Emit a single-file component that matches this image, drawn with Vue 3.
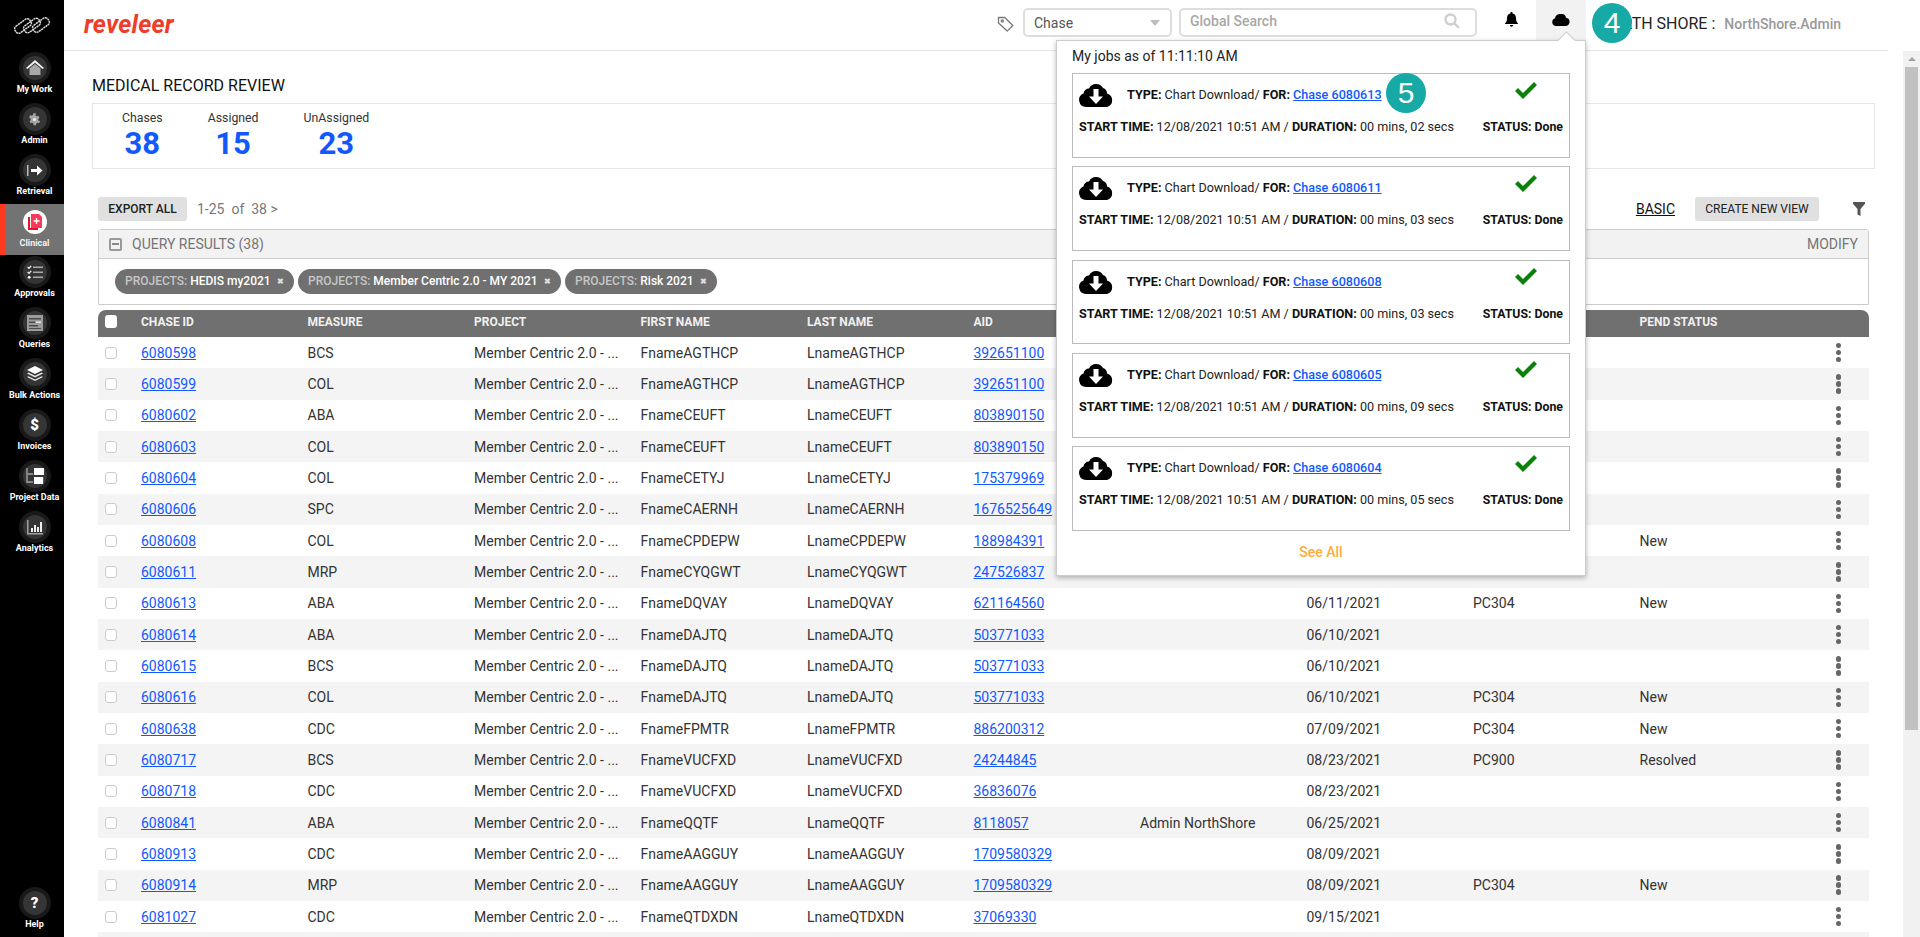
<script setup>
const navItems = [
  { label: 'My Work', icon: 'home' },
  { label: 'Admin', icon: 'gear' },
  { label: 'Retrieval', icon: 'retrieval' },
  { label: 'Clinical', icon: 'clinical', active: true },
  { label: 'Approvals', icon: 'approvals' },
  { label: 'Queries', icon: 'queries' },
  { label: 'Bulk Actions', icon: 'bulk' },
  { label: 'Invoices', icon: 'invoices' },
  { label: 'Project Data', icon: 'project' },
  { label: 'Analytics', icon: 'analytics' }
]
const stats = [
  { label: 'Chases', value: 38 },
  { label: 'Assigned', value: 15 },
  { label: 'UnAssigned', value: 23 }
]
const chips = ['HEDIS my2021', 'Member Centric 2.0 - MY 2021', 'Risk 2021']
const columns = ['CHASE ID', 'MEASURE', 'PROJECT', 'FIRST NAME', 'LAST NAME', 'AID', '', '', '', 'PEND STATUS']
const P = 'Member Centric 2.0 - ...'
const rows = [
  ['6080598', 'BCS', 'FnameAGTHCP', 'LnameAGTHCP', '392651100'],
  ['6080599', 'COL', 'FnameAGTHCP', 'LnameAGTHCP', '392651100'],
  ['6080602', 'ABA', 'FnameCEUFT', 'LnameCEUFT', '803890150'],
  ['6080603', 'COL', 'FnameCEUFT', 'LnameCEUFT', '803890150'],
  ['6080604', 'COL', 'FnameCETYJ', 'LnameCETYJ', '175379969'],
  ['6080606', 'SPC', 'FnameCAERNH', 'LnameCAERNH', '1676525649'],
  ['6080608', 'COL', 'FnameCPDEPW', 'LnameCPDEPW', '188984391', '', '', '', 'New'],
  ['6080611', 'MRP', 'FnameCYQGWT', 'LnameCYQGWT', '247526837'],
  ['6080613', 'ABA', 'FnameDQVAY', 'LnameDQVAY', '621164560', '', '06/11/2021', 'PC304', 'New'],
  ['6080614', 'ABA', 'FnameDAJTQ', 'LnameDAJTQ', '503771033', '', '06/10/2021', '', ''],
  ['6080615', 'BCS', 'FnameDAJTQ', 'LnameDAJTQ', '503771033', '', '06/10/2021', '', ''],
  ['6080616', 'COL', 'FnameDAJTQ', 'LnameDAJTQ', '503771033', '', '06/10/2021', 'PC304', 'New'],
  ['6080638', 'CDC', 'FnameFPMTR', 'LnameFPMTR', '886200312', '', '07/09/2021', 'PC304', 'New'],
  ['6080717', 'BCS', 'FnameVUCFXD', 'LnameVUCFXD', '24244845', '', '08/23/2021', 'PC900', 'Resolved'],
  ['6080718', 'CDC', 'FnameVUCFXD', 'LnameVUCFXD', '36836076', '', '08/23/2021', '', ''],
  ['6080841', 'ABA', 'FnameQQTF', 'LnameQQTF', '8118057', 'Admin NorthShore', '06/25/2021', '', ''],
  ['6080913', 'CDC', 'FnameAAGGUY', 'LnameAAGGUY', '1709580329', '', '08/09/2021', '', ''],
  ['6080914', 'MRP', 'FnameAAGGUY', 'LnameAAGGUY', '1709580329', '', '08/09/2021', 'PC304', 'New'],
  ['6081027', 'CDC', 'FnameQTDXDN', 'LnameQTDXDN', '37069330', '', '09/15/2021', '', ''],
  ['', '', '', '', '', '', '', '', '']
]
const jobs = [
  { id: '6080613', secs: '02' },
  { id: '6080611', secs: '03' },
  { id: '6080608', secs: '03' },
  { id: '6080605', secs: '09' },
  { id: '6080604', secs: '05' }
]
</script>

<template>
  <div class="app">
    <aside class="sidebar">
      <svg class="brand" width="36" height="18" viewBox="0 0 36 18" fill="none" stroke="#d8d8d8" stroke-width="1.500" stroke-dasharray="2.200 .5">
        <rect x="-9" y="-4" width="18" height="8" rx="3" transform="translate(9 10) rotate(-36)" />
        <rect x="-9" y="-4" width="18" height="8" rx="3" transform="translate(18 9.500) rotate(-36)" />
        <rect x="-9" y="-4" width="18" height="8" rx="3" transform="translate(27 9) rotate(-36)" />
      </svg>
      <nav class="nav">
        <a v-for="item in navItems" :key="item.label" class="nav-item" :class="{ active: item.active }">
          <span class="ring">
            <span class="disc">
              <svg v-if="item.icon === 'home'" width="18" height="16" viewBox="0 0 18 16"><path d="M3.500 8.500 9 4l5.500 4.500V15H3.500z" fill="#a8a8a8" /><path d="M0 8 9 0l9 8-1.500 1L9 2.800 1.500 9z" fill="#f0f0f0" /></svg>
              <svg v-else-if="item.icon === 'gear'" width="15" height="15" viewBox="0 0 24 24"><path fill="#a6a6a6" d="M19.400 13c.1-.3.100-.7.100-1s0-.7-.1-1l2.100-1.600-2-3.500-2.500 1a7 7 0 0 0-1.700-1L15.500 2h-4l-.4 2.900c-.6.200-1.200.6-1.700 1l-2.500-1-2 3.500L7.500 11c-.1.300-.1.700-.1 1s0 .7.100 1l-2.100 1.600 2 3.500 2.500-1c.5.400 1.100.8 1.700 1l.4 2.900h4l.4-2.900c.6-.2 1.200-.6 1.700-1l2.500 1 2-3.500z" transform="translate(-1.500)" /><circle cx="12" cy="12" r="2.500" fill="#eee" /></svg>
              <svg v-else-if="item.icon === 'retrieval'" width="16" height="13" viewBox="0 0 16 13"><rect x="0" y="1" width="1.500" height="11" fill="#bbb" /><path d="M4 5h6V1.500L15.500 6.500 10 11.500V8H4z" fill="#fff" /></svg>
              <svg v-else-if="item.icon === 'clinical'" width="16" height="18" viewBox="0 0 16 18"><path d="M1 4h2v11h8v2H1z" fill="#e8112d" /><path d="M4 1h8l3 3v11H4z" fill="#f7395a" /><path d="M8.800 5h1.400v2.300h2.300v1.400h-2.300V11H8.800V8.700H6.500V7.300h2.300z" fill="#fff" /></svg>
              <svg v-else-if="item.icon === 'approvals'" width="16" height="14" viewBox="0 0 16 14" fill="none"><path d="M.7 2 2 3.300 4.200.8M.7 7 2 8.300 4.200 5.800" stroke="#fff" stroke-width="1.200" /><circle cx="2.200" cy="12.300" r="1.400" fill="#fff" /><path d="M6 2.200h10M6 7.200h10M6 12.200h10" stroke="#aaa" stroke-width="1.500" /></svg>
              <svg v-else-if="item.icon === 'queries'" width="16" height="16" viewBox="0 0 16 16"><rect width="16" height="16" fill="#9b9b9b" /><path d="M2 3h12v1.500H2zM2 6.500h6V8H2zM2 10h9v1.500H2zM2 13h12v1H2z" fill="#4a4a4a" /><path d="M9 6.500h5V8H9z" fill="#e8e8e8" /></svg>
              <svg v-else-if="item.icon === 'bulk'" width="16" height="16" viewBox="0 0 16 16"><path d="M8 0l8 4-8 4-8-4z" fill="#fff" /><path d="M1.500 6.600 8 9.800l6.500-3.200L16 7.500 8 11.500 0 7.500z" fill="#e6e6e6" /><path d="M1.500 10.200 8 13.400l6.500-3.200L16 11l-8 4-8-4z" fill="#e6e6e6" /></svg>
              <span v-else-if="item.icon === 'invoices'" class="glyph">$</span>
              <svg v-else-if="item.icon === 'project'" width="18" height="16" viewBox="0 0 18 16"><path d="M1 0v14h6M1 6h6" fill="none" stroke="#8a8a8a" stroke-width="1.800" /><rect x="8" y="0" width="10" height="7" fill="#fff" /><rect x="8" y="9" width="10" height="7" fill="#fff" /><rect x="17" y="9" width="1" height="7" fill="#e8112d" /></svg>
              <svg v-else-if="item.icon === 'analytics'" width="16" height="15" viewBox="0 0 16 15"><path d="M0 0h1.500v13H16v1.500H0z" fill="#a0a0a0" /><path d="M4 8h2v4H4zM7 5h2v7H7zM10 7h2v5h-2zM13 2h2v10h-2z" fill="#eee" /></svg>
            </span>
          </span>
          <span class="nav-label">{{ item.label }}</span>
        </a>
        <a class="nav-item help">
          <span class="ring"><span class="disc"><span class="glyph">?</span></span></span>
          <span class="nav-label">Help</span>
        </a>
      </nav>
    </aside>

    <div class="main">
      <header class="topbar">
        <span class="wordmark">reveleer</span>
        <svg class="tag" width="18" height="18" viewBox="0 0 18 18" fill="none" stroke="#777" stroke-width="1.300"><path d="M1.500 2.500h6.300l8 8-5.600 5.600-8.700-8z" stroke-linejoin="round" /><circle cx="5.300" cy="6" r="1.100" /></svg>
        <div class="select">
          <span>Chase</span>
          <i class="caret"></i>
        </div>
        <div class="search">
          <span>Global Search</span>
          <svg width="16" height="16" viewBox="0 0 16 16" fill="none" stroke="#cfcfcf" stroke-width="2.400"><circle cx="6.500" cy="6.500" r="5" /><path d="m10 10 5 5" /></svg>
        </div>
        <div class="bell-cell">
          <svg width="13" height="15" viewBox="0 0 13 15" fill="#000"><path d="M6.500 0c.7 0 1.100.4 1.100 1v.5C9.800 2 11 3.700 11 6c0 3 .7 4.200 2 5.500V12H0v-.5C1.300 10.200 2 9 2 6c0-2.300 1.200-4 3.400-4.500V1c0-.6.400-1 1.100-1z" /><path d="M4.800 13h3.400a1.700 1.700 0 0 1-3.400 0z" /></svg>
        </div>
        <div class="cloud-cell">
          <svg width="18" height="13" viewBox="0 0 18 13" fill="#000"><path d="M4 13a4 4 0 0 1-1-7.800A5 5 0 0 1 9 1a4.500 4.500 0 0 1 5 3.700A4.200 4.200 0 0 1 14 13z" /></svg>
        </div>
        <div class="account">
          <span class="org">NORTH SHORE :</span>
          <span class="user">NorthShore.Admin</span>
        </div>
      </header>

      <div class="body">
        <main class="content">
          <h1 class="title">MEDICAL RECORD REVIEW</h1>
          <section class="stats">
            <div v-for="s in stats" :key="s.label" class="stat">
              <span class="stat-label">{{ s.label }}</span>
              <strong class="stat-value">{{ s.value }}</strong>
            </div>
          </section>

          <div class="inner">
            <div class="toolbar">
              <button class="btn export">EXPORT ALL</button>
              <span class="pager">1-25&nbsp; of&nbsp; 38 &gt;</span>
              <a class="basic">BASIC</a>
              <button class="btn create">CREATE NEW VIEW</button>
              <svg class="filter" width="12" height="14" viewBox="0 0 12 14" fill="#555"><path d="M0 0h12v1.800L7.500 7v7l-3-1.500V7L0 1.800z" /></svg>
            </div>

            <section class="panel">
              <div class="panel-head">
                <span class="collapse"><i></i></span>
                <span class="panel-title">QUERY RESULTS (38)</span>
                <span class="modify">MODIFY</span>
              </div>
              <div class="chips">
                <span v-for="c in chips" :key="c" class="chip"><em>PROJECTS:</em> {{ c }} <b>✖</b></span>
              </div>
            </section>

            <section class="grid">
              <div class="grid-head line">
                <div class="cell"><span class="hcheck"></span></div>
                <div v-for="(c, i) in columns" :key="i" class="cell">{{ c }}</div>
                <div class="cell"></div>
              </div>
              <div v-for="(r, i) in rows" :key="i" class="line row">
                <div class="cell"><span v-if="r[0]" class="check"></span></div>
                <div class="cell"><a class="link">{{ r[0] }}</a></div>
                <div class="cell">{{ r[1] }}</div>
                <div class="cell">{{ r[0] ? P : '' }}</div>
                <div class="cell">{{ r[2] }}</div>
                <div class="cell">{{ r[3] }}</div>
                <div class="cell"><a class="link">{{ r[4] }}</a></div>
                <div class="cell">{{ r[5] }}</div>
                <div class="cell">{{ r[6] }}</div>
                <div class="cell">{{ r[7] }}</div>
                <div class="cell">{{ r[8] }}</div>
                <div class="cell dots-cell"><span v-if="r[0]" class="dots"><i></i><i></i><i></i></span></div>
              </div>
            </section>
          </div>
        </main>
        <div class="scrollbar">
          <i class="up"></i>
          <span class="thumb"></span>
        </div>
      </div>
    </div>

    <div class="popup">
      <span class="pointer"></span>
      <div class="popup-title">My jobs as of 11:11:10 AM</div>
      <article v-for="j in jobs" :key="j.id" class="job">
        <div class="job-top">
          <svg class="job-icon" width="35" height="25" viewBox="0 0 35 25"><path d="M7 25A7 7 0 0 1 4.500 11.500 5.500 5.500 0 0 1 10 6.500 8 8 0 0 1 24 6a6 6 0 0 1 4 5.500A7 7 0 0 1 28 25z" fill="#000" /><path d="M14.500 7h5v7.500h4.500L17 22l-7-7.500h4.500z" fill="#fff" /></svg>
          <span class="job-type"><b>TYPE:</b> Chart Download/ <b>FOR:</b> <a class="link">Chase {{ j.id }}</a></span>
          <svg class="job-check" width="22" height="17" viewBox="0 0 22 17"><path d="M0 9l3-3 5 5L19 0l3 3L8 17z" fill="#0a820a" /></svg>
        </div>
        <div class="job-bottom">
          <span><b>START TIME:</b> 12/08/2021 10:51 AM / <b>DURATION:</b> 00 mins, {{ j.secs }} secs</span>
          <b class="job-status">STATUS: Done</b>
        </div>
      </article>
      <div class="see-all">See All</div>
    </div>

    <span class="marker marker-4">4</span>
    <span class="marker marker-5">5</span>
  </div>
</template>

<style>
html, body { margin: 0; height: 100%; overflow: hidden; background: #fff; }
</style>

<style scoped>
* { box-sizing: border-box; }
.app { position: relative; display: flex; width: 1920px; height: 937px; overflow: hidden; font-family: Roboto, "Liberation Sans", sans-serif; color: #333; font-size: 14px; background: #fff; }

.sidebar { position: relative; width: 64px; flex: none; background: #000; display: flex; flex-direction: column; }
.brand { position: absolute; left: 14px; top: 16px; }
.nav { display: flex; flex-direction: column; flex: 1; padding-top: 51px; }
.nav-item { display: flex; flex-direction: column; align-items: center; height: 51px; flex: none; padding-top: 1px; border-left: 5px solid transparent; }
.nav-item.active { background: #737373; border-left-color: #ff3b1f; padding-top: 2px; }
.nav-item.help { margin-top: auto; }
.ring { width: 32px; height: 32px; border-radius: 50%; background: #191919; display: flex; align-items: center; justify-content: center; }
.disc { width: 24px; height: 24px; border-radius: 50%; background: #353535; display: flex; align-items: center; justify-content: center; }
.active .ring { background: transparent; }
.active .disc { background: #fff; }
.glyph { color: #fff; font-weight: 900; font-size: 15px; line-height: 1; }
.nav-label { margin-top: -1px; font-size: 9px; line-height: 12px; font-weight: 700; color: #fff; white-space: nowrap; }
.active .nav-label { color: #f2f2f2; }

.main { flex: 1; min-width: 0; display: flex; flex-direction: column; }
.topbar { width: 1824px; height: 51px; flex: none; display: flex; border-bottom: 1px solid #e6e6e6; padding-left: 20px; }
.wordmark { color: #ee3d2a; font-style: italic; font-weight: 700; font-size: 25px; line-height: 50px; width: 914px; flex: none; letter-spacing: .2px; }
.tag { margin-top: 15px; margin-left: -1px; }
.select { width: 149px; height: 29px; margin: 8px 0 0 8px; border: 2px solid #ddd; border-radius: 5px; display: flex; align-items: center; justify-content: space-between; padding: 0 10px 0 9px; color: #555; }
.caret { border: 5px solid transparent; border-top: 6px solid #bdbdbd; border-bottom: 0; }
.search { width: 298px; height: 29px; margin: 8px 0 0 7px; border: 2px solid #ddd; border-radius: 5px; display: flex; align-items: center; justify-content: space-between; padding: 0 15px 3px 9px; color: #a8a8a8; font-weight: 500; }
.bell-cell { width: 59px; height: 40px; display: flex; align-items: center; justify-content: center; padding: 0 0 2px 9px; }
.cloud-cell { width: 50px; height: 40px; background: #f2f2f2; display: flex; align-items: center; justify-content: center; padding-bottom: 2px; }
.account { margin-left: 14px; height: 50px; display: flex; align-items: center; padding-bottom: 3px; white-space: nowrap; }
.org { font-size: 16px; color: #222; }
.user { margin-left: 9px; color: #999; font-weight: 500; }

.body { flex: 1; min-height: 0; display: flex; }
.content { flex: 1; min-width: 0; padding: 25px 28px 0; overflow: hidden; }
.title { margin: 0; font-size: 16px; line-height: 20px; font-weight: 400; color: #111; }
.stats { margin-top: 7px; height: 66px; border: 1px solid #e6e6e6; display: flex; gap: 45px; padding: 5px 0 0 29px; }
.stat { display: flex; flex-direction: column; align-items: center; }
.stat-label { font-size: 12.300px; line-height: 18px; color: #333; }
.stat-value { font-size: 31px; line-height: 33px; font-weight: 700; color: #1159ff; }

.inner { margin: 28px 6px 0; }
.toolbar { display: flex; align-items: center; height: 24px; }
.btn { border: 0; border-radius: 3px; background: #e0e0e0; height: 24px; padding: 0; font: 500 12px/24px Roboto, "Liberation Sans", sans-serif; color: #222; }
.export { width: 89px; }
.pager { margin-left: 10px; color: #777; }
.basic { margin-left: auto; color: #111; text-decoration: underline; }
.create { width: 124px; margin-left: 20px; font-weight: 400; }
.filter { margin: 0 4px 0 34px; }

.panel { margin-top: 8px; border: 1px solid #ccc; border-radius: 3px 3px 0 0; height: 76px; }
.panel-head { height: 29px; background: #f2f2f2; border-bottom: 1px solid #ccc; display: flex; align-items: center; padding: 0 10px; color: #757575; }
.collapse { width: 13px; height: 13px; border: 2px solid #999; border-radius: 2px; display: flex; align-items: center; justify-content: center; }
.collapse i { width: 7px; height: 2px; background: #888; }
.panel-title { margin-left: 10px; }
.modify { margin-left: auto; }
.chips { display: flex; gap: 4px; padding: 10px 0 0 16px; }
.chip { height: 25px; border-radius: 13px; background: #707070; color: #fff; font-size: 12px; font-weight: 500; line-height: 24px; padding: 0 10px; white-space: nowrap; }
.chip em { font-style: normal; color: #c6c6c6; }
.chip b { margin-left: 3.500px; font-size: 8px; color: #ddd; vertical-align: 1px; }

.grid { margin-top: 5px; }
.line { display: grid; grid-template-columns: 43px repeat(10, 166.5px) 1fr; align-items: center; }
.grid-head { height: 27px; background: #707070; border-radius: 8px 8px 0 0; color: #f0f0f0; font-size: 12px; font-weight: 700; }
.row { height: 31.33px; }
.row:nth-child(odd) { background: #f4f4f4; }
.row:nth-child(even) { background: #fff; }
.cell { padding: 0; white-space: nowrap; }
.grid-head .cell { padding-bottom: 4px; }
.hcheck, .check { display: block; width: 12px; height: 12px; margin-left: 7px; border-radius: 3px; }
.hcheck { background: #fff; height: 13px; }
.check { background: #fff; border: 1px solid #ccc; }
.link { color: #1159ff; text-decoration: underline; }
.dots-cell { display: flex; justify-content: flex-end; padding-right: 28px; }
.dots { display: flex; flex-direction: column; gap: 1.500px; }
.dots i { width: 5.500px; height: 5.500px; border-radius: 50%; background: #666; }

.scrollbar { position: relative; width: 17px; flex: none; background: #f1f1f1; }
.up { position: absolute; left: 5px; top: 6px; border: 4px solid transparent; border-top: 0; border-bottom: 4px solid #a3a3a3; }
.thumb { position: absolute; left: 2px; right: 2px; top: 16px; height: 663px; background: #c1c1c1; }

.popup { position: absolute; left: 1056px; top: 40px; width: 530px; height: 536px; background: #fff; border: 1px solid #ccc; box-shadow: 0 2px 5px rgba(0,0,0,.28); padding: 0 15px; z-index: 5; }
.pointer { position: absolute; left: 503px; top: -7px; width: 13px; height: 13px; background: #fff; border-left: 1px solid #ccc; border-top: 1px solid #ccc; transform: rotate(45deg); }
.popup-title { height: 32px; line-height: 31px; color: #222; position: relative; }
.job { height: 84.750px; margin-bottom: 8.500px; border: 1px solid #bbb; padding: 8px 6px 0; font-size: 12.600px; color: #222; }
.job b { font-weight: 700; color: #111; }
.job .link { font-weight: 500; }
.job .job-status { font-size: 12.300px; }
.job-top { display: flex; align-items: center; height: 25px; }
.job-icon { flex: none; }
.job-type { margin-left: 13px; }
.job-check { margin: -9px 26px 0 auto; }
.job-bottom { display: flex; justify-content: space-between; margin-top: 13px; line-height: 14px; }
.see-all { text-align: center; color: #fbad3a; font-weight: 500; margin-top: 12px; line-height: 18px; }

.marker { position: absolute; width: 40px; height: 40px; border-radius: 50%; background: #17a9a5; color: #fff; font: 400 30px/40px "Liberation Sans", sans-serif; text-align: center; z-index: 6; }
.marker-4 { left: 1592px; top: 3px; }
.marker-5 { left: 1386px; top: 73px; }
</style>
